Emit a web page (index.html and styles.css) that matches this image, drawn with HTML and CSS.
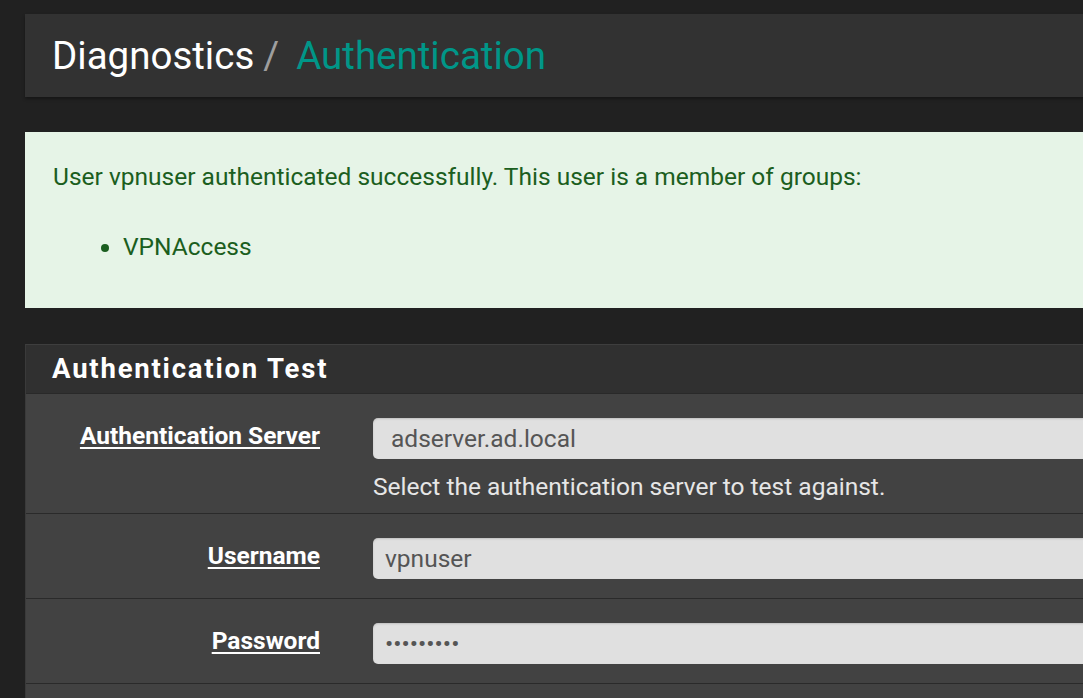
FILE: index.html
```html
<!DOCTYPE html>
<html>
<head>
<meta charset="utf-8">
<title>Diagnostics / Authentication</title>
<link rel="stylesheet" href="styles.css">
</head>
<body>
<div class="page">
  <div class="header">
    <h1 class="breadcrumb"><span class="crumb">Diagnostics</span><span class="sep">/</span><span class="current">Authentication</span></h1>
  </div>

  <div class="alert">
    <p class="alert-text">User vpnuser authenticated successfully. This user is a member of groups:</p>
    <ul class="groups">
      <li>VPNAccess</li>
    </ul>
  </div>

  <div class="panel">
    <div class="panel-heading"><h2 class="panel-title">Authentication Test</h2></div>
    <div class="panel-body">
      <div class="form-row first">
        <div class="label-col"><span class="label">Authentication Server</span></div>
        <div class="field-col">
          <div class="control select">adserver.ad.local</div>
          <div class="help">Select the authentication server to test against.</div>
        </div>
      </div>
      <div class="form-row">
        <div class="label-col"><span class="label">Username</span></div>
        <div class="field-col">
          <div class="control">vpnuser</div>
        </div>
      </div>
      <div class="form-row">
        <div class="label-col"><span class="label">Password</span></div>
        <div class="field-col">
          <div class="control dots">&#8226;&#8226;&#8226;&#8226;&#8226;&#8226;&#8226;&#8226;&#8226;</div>
        </div>
      </div>
      <div class="form-row last"></div>
    </div>
  </div>
</div>
</body>
</html>
```

FILE: styles.css
```css
html, body {
  margin: 0;
  padding: 0;
  background: #212121;
  overflow: hidden;
  font-family: Roboto, "Noto Sans", sans-serif;
}

.page {
  width: 1300px;
  padding: 14px 0 0 25px;
}

.header {
  background: #323232;
  height: 83px;
  display: flex;
  align-items: center;
  padding-left: 27px;
  box-shadow: 0 2px 3px rgba(0, 0, 0, 0.35);
}

.breadcrumb {
  margin: 0;
  font-size: 38.5px;
  font-weight: 400;
  line-height: 1;
  padding-top: 2px;
}

.crumb { color: #ffffff; }
.sep { color: #9e9e9e; margin: 0 17px 0 9px; }
.current { color: #009688; }

.alert {
  margin-top: 35px;
  height: 176px;
  box-sizing: border-box;
  background: #e6f4e7;
  color: #1b5e20;
  padding: 30px 28px 0 28px;
  font-size: 24.5px;
}

.alert-text {
  margin: 0;
  line-height: 30px;
}

.groups {
  margin: 40px 0 0 0;
  padding-left: 70px;
  line-height: 30px;
}

.panel {
  margin-top: 36px;
  border-top: 1px solid #3e3e3e;
  border-left: 1px solid #3a3a3a;
}

.panel-heading {
  background: #303030;
  height: 48px;
  display: flex;
  align-items: center;
  padding-left: 26px;
  border-bottom: 1px solid #292929;
}

.panel-title {
  margin: 0;
  color: #ffffff;
  font-size: 27.5px;
  font-weight: 700;
  letter-spacing: 1.8px;
  line-height: 1;
}

.panel-body {
  background: #424242;
}

.form-row {
  display: grid;
  grid-template-columns: 294px 1fr;
  column-gap: 53px;
  padding: 24px 0 19px 0;
  border-bottom: 1px solid #2a2a2a;
}

.form-row.first {
  padding-bottom: 12px;
}

.form-row.last {
  border-bottom: none;
  padding: 0;
  height: 20px;
}

.label-col {
  text-align: right;
  padding-top: 4px;
  line-height: 28px;
}

.label {
  color: #ffffff;
  font-size: 24.5px;
  font-weight: 700;
  text-decoration: underline;
  text-underline-offset: 3px;
  text-decoration-thickness: 2px;
}

.control {
  background: #e0e0e0;
  height: 41px;
  box-sizing: border-box;
  border-radius: 5px;
  color: #555555;
  font-size: 24.5px;
  line-height: 41px;
  padding-left: 12px;
  box-shadow: inset 0 1px 2px rgba(0, 0, 0, 0.15);
}

.control.select {
  padding-left: 18px;
}

.control.dots {
  padding-left: 12px;
  letter-spacing: 0;
}

.help {
  color: #e6e6e6;
  font-size: 24.5px;
  line-height: 28px;
  margin-top: 14px;
}
```
